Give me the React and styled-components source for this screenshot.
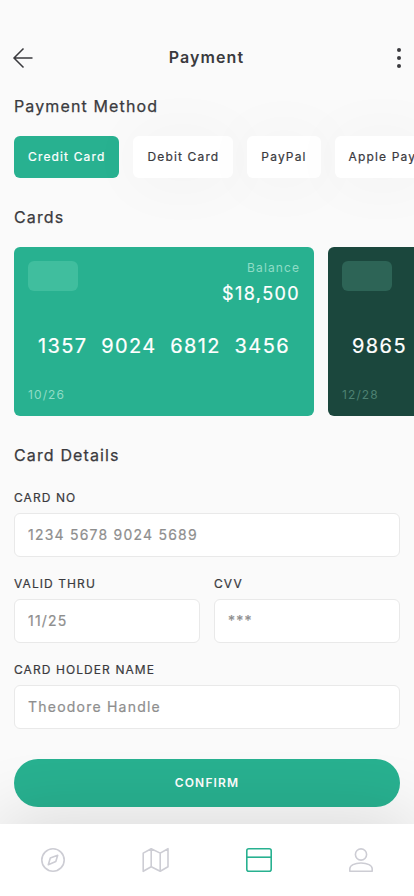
import styled, { createGlobalStyle } from 'styled-components';

const methods = ['Credit Card', 'Debit Card', 'PayPal', 'Apple Pay'];

const cards = [
	{
		number: ['1357', '9024', '6812', '3456'],
		balance: '$18,500',
		expiry: '10/26',
		color: '#28b190',
		chip: '#40be9e',
		muted: '#8fdcc6',
	},
	{
		number: ['9865', '3467', '8012', '5643'],
		balance: '$12,200',
		expiry: '12/28',
		color: '#1b473d',
		chip: '#2d6456',
		muted: '#4d8172',
	},
];

function BackIcon() {
	return (
		<svg width="22" height="22" viewBox="0 0 22 22" fill="none">
			<path
				d="M20.5 11H2M11.5 1.5L2 11l9.5 9.5"
				stroke="#3a3a3e"
				strokeWidth="1.5"
			/>
		</svg>
	);
}

function MoreIcon() {
	return (
		<svg width="4" height="20" viewBox="0 0 4 20" fill="#3a3a3e">
			<circle cx="2" cy="2" r="2" />
			<circle cx="2" cy="10" r="2" />
			<circle cx="2" cy="18" r="2" />
		</svg>
	);
}

function CompassIcon() {
	return (
		<NavIcon>
			<circle cx="14" cy="14" r="11.2" />
			<path d="M18.7 9.3l-1.9 6.2-7.5 3.2 2-6.7z" />
		</NavIcon>
	);
}

function MapIcon() {
	return (
		<NavIcon>
			<path d="M1.2 7.1l8-4.4 9 4.4 7.8-4.4v18l-7.8 4.6-9-4.6-8 4.6zM9.2 2.7v18M18.2 7.1v18.2" />
		</NavIcon>
	);
}

function CardIcon() {
	return (
		<NavIcon $active>
			<rect x="2.8" y="2.8" width="24.4" height="22.4" rx="2" />
			<path d="M2.8 11.2h24.4" />
		</NavIcon>
	);
}

function UserIcon() {
	return (
		<NavIcon>
			<circle cx="14" cy="8.5" r="5.6" />
			<path d="M2.8 25.2v-2.4c0-3.4 4.8-5.8 11.2-5.8s11.2 2.4 11.2 5.8v2.4z" />
		</NavIcon>
	);
}

function Field({ label, value }) {
	return (
		<FieldLabel>
			{label}
			<Input defaultValue={value} />
		</FieldLabel>
	);
}

function App() {
	return (
		<Page>
			<GlobalStyle />
			<Header>
				<IconButton aria-label="Back">
					<BackIcon />
				</IconButton>
				<Title>Payment</Title>
				<IconButton aria-label="More" $end>
					<MoreIcon />
				</IconButton>
			</Header>
			<SectionTitle>Payment Method</SectionTitle>
			<MethodList>
				{methods.map((method, i) => (
					<Method key={method} $active={i === 0}>
						{method}
					</Method>
				))}
			</MethodList>
			<SectionTitle>Cards</SectionTitle>
			<CardList>
				{cards.map((card) => (
					<BankCard key={card.expiry} $color={card.color}>
						<CardTop>
							<Chip $color={card.chip} />
							<Balance>
								<Muted $color={card.muted}>Balance</Muted>
								<Amount>{card.balance}</Amount>
							</Balance>
						</CardTop>
						<CardNumber>
							{card.number.map((part) => (
								<span key={part}>{part}</span>
							))}
						</CardNumber>
						<Muted $color={card.muted}>{card.expiry}</Muted>
					</BankCard>
				))}
			</CardList>
			<SectionTitle>Card Details</SectionTitle>
			<Form>
				<Field label="CARD NO" value="1234 5678 9024 5689" />
				<FieldRow>
					<Field label="VALID THRU" value="11/25" />
					<Field label="CVV" value="***" />
				</FieldRow>
				<Field label="CARD HOLDER NAME" value="Theodore Handle" />
				<Confirm type="button">CONFIRM</Confirm>
			</Form>
			<Nav>
				<CompassIcon />
				<MapIcon />
				<CardIcon />
				<UserIcon />
			</Nav>
		</Page>
	);
}

const GlobalStyle = createGlobalStyle`
	* {
		box-sizing: border-box;
	}
	body {
		margin: 0;
		background: #fafafa;
	}
	button, input {
		font: inherit;
		letter-spacing: inherit;
	}
`;

const Page = styled.div`
	display: flex;
	flex-direction: column;
	width: 414px;
	height: 896px;
	padding-top: 36px;
	overflow: hidden;
	background: #fafafa;
	color: #3a3a3e;
	font-family: Inter, 'Liberation Sans', sans-serif;
	letter-spacing: 1.2px;
`;

const Header = styled.header`
	display: grid;
	grid-template-columns: 60px 1fr 60px;
	align-items: center;
	height: 44px;
	padding: 0 13px 0 12px;
	flex-shrink: 0;
`;

const IconButton = styled.button`
	display: flex;
	justify-content: ${({ $end }) => ($end ? 'flex-end' : 'flex-start')};
	padding: 0;
	border: 0;
	background: none;
`;

const Title = styled.h1`
	margin: 0;
	padding-bottom: 2px;
	font-size: 16px;
	font-weight: 600;
	line-height: 20px;
	letter-spacing: 1.1px;
	text-align: center;
`;

const SectionTitle = styled.h2`
	margin: 0;
	padding: 0 14px;
	height: 20px;
	font-size: 16px;
	font-weight: 400;
	line-height: 20px;
	letter-spacing: 1.13px;
	-webkit-text-stroke: 0.25px;
	flex-shrink: 0;

	${Header} + & {
		margin-top: 16px;
	}
`;

const MethodList = styled.div`
	display: flex;
	gap: 14px;
	padding: 0 14px;
	margin: 20px 0 29px;
	flex-shrink: 0;
`;

const Method = styled.button`
	flex-shrink: 0;
	height: 42px;
	padding: 0 14px 2px;
	border: 0;
	border-radius: 6px;
	background: ${({ $active }) => ($active ? '#28b190' : '#fff')};
	color: ${({ $active }) => ($active ? '#fff' : '#3a3a3e')};
	font-size: 12px;
	font-weight: 400;
	letter-spacing: 1.15px;
	-webkit-text-stroke: 0.2px;
	box-shadow: ${({ $active }) =>
		$active ? 'none' : '0 2px 64px rgba(0, 0, 0, 0.045)'};
`;

const CardList = styled.div`
	display: flex;
	gap: 14px;
	padding: 0 14px;
	margin: 20px 0 29px;
	flex-shrink: 0;
`;

const BankCard = styled.article`
	display: flex;
	flex-direction: column;
	flex-shrink: 0;
	width: 300px;
	height: 169px;
	padding: 14px;
	border-radius: 6px;
	background: ${({ $color }) => $color};
	color: #fff;
`;

const CardTop = styled.div`
	display: flex;
	justify-content: space-between;
	height: 72px;
`;

const Chip = styled.div`
	width: 50px;
	height: 30px;
	border-radius: 6px;
	background: ${({ $color }) => $color};
`;

const Balance = styled.div`
	display: flex;
	flex-direction: column;
	align-items: flex-end;
`;

const Muted = styled.span`
	color: ${({ $color }) => $color};
	font-size: 12px;
	line-height: 14px;
	letter-spacing: 1.1px;
`;

const Amount = styled.strong`
	margin-top: 8px;
	font-size: 18px;
	font-weight: 400;
	line-height: 22px;
	letter-spacing: 1.4px;
	-webkit-text-stroke: 0.2px;
`;

const CardNumber = styled.div`
	display: flex;
	justify-content: space-between;
	margin-bottom: 29px;
	padding: 0 10px;
	font-size: 20px;
	font-weight: 400;
	line-height: 26px;
	letter-spacing: 1.4px;
	-webkit-text-stroke: 0.2px;
`;

const Form = styled.form`
	display: flex;
	flex-direction: column;
	gap: 20px;
	padding: 0 14px;
	margin-top: 26px;
`;

const FieldRow = styled.div`
	display: grid;
	grid-template-columns: 1fr 1fr;
	gap: 14px;
`;

const FieldLabel = styled.label`
	display: flex;
	flex-direction: column;
	gap: 8px;
	font-size: 12px;
	font-weight: 400;
	line-height: 14px;
	letter-spacing: 1.08px;
	-webkit-text-stroke: 0.2px;
`;

const Input = styled.input`
	width: 100%;
	height: 44px;
	padding: 0 13px 1px;
	border: 1px solid #e9e9e9;
	border-radius: 6px;
	background: #fff;
	color: #8e8e8e;
	font-size: 14px;
	letter-spacing: 1.22px;
	outline: none;
`;

const Confirm = styled.button`
	height: 48px;
	margin-top: 10px;
	padding: 0 0 1px;
	border: 0;
	border-radius: 24px;
	background: #28b190;
	color: #fff;
	font-size: 12px;
	font-weight: 600;
	letter-spacing: 1.15px;
`;

const Nav = styled.nav`
	display: flex;
	justify-content: space-between;
	align-items: center;
	height: 72px;
	margin-top: auto;
	padding: 0 39px;
	background: #fff;
	box-shadow: 0 -6px 72px rgba(0, 0, 0, 0.14);
	flex-shrink: 0;
	/* keeps the shadow above the confirm button */
	z-index: 1;
`;

const NavIcon = styled.svg.attrs({ viewBox: '0 0 28 28' })`
	width: 28px;
	height: 28px;
	fill: none;
	stroke: ${({ $active }) => ($active ? '#28b190' : '#cdcdd4')};
	stroke-width: 1.6;
	stroke-linejoin: round;
`;

export default App;
